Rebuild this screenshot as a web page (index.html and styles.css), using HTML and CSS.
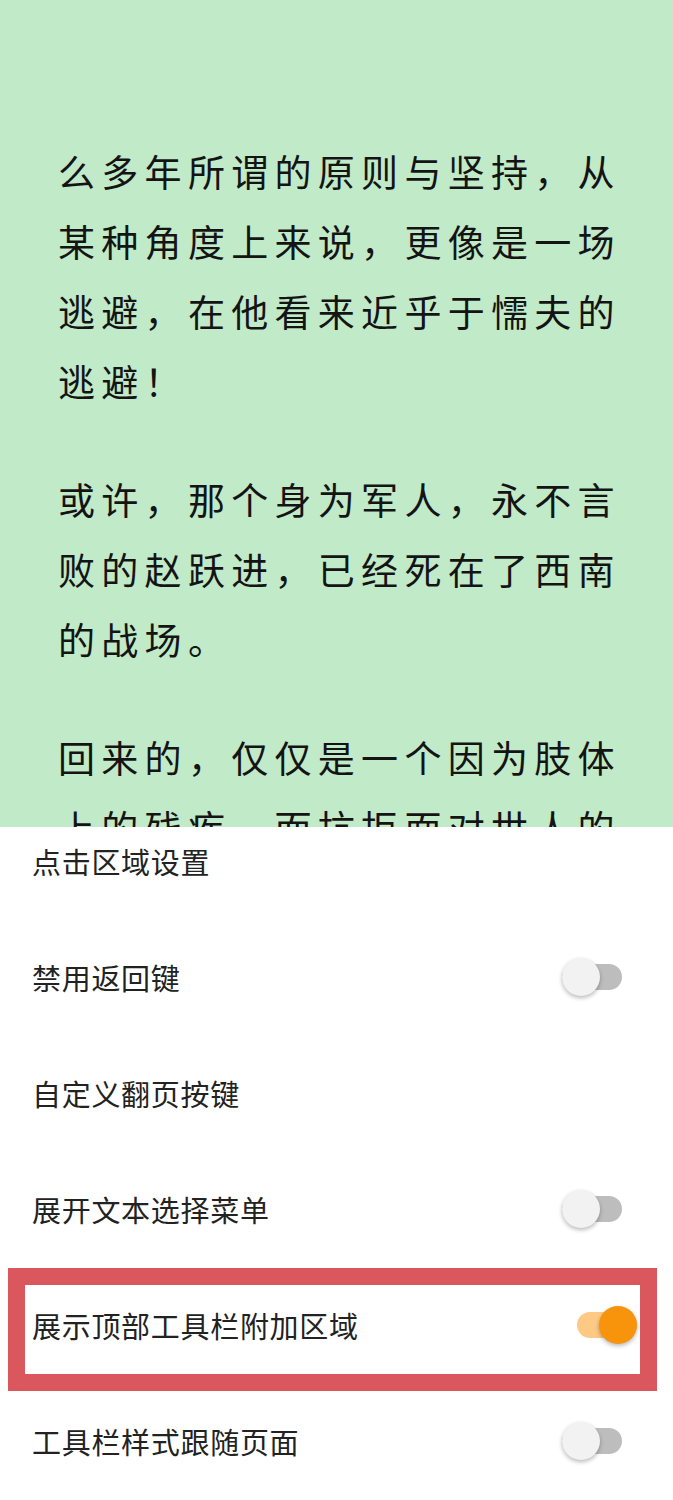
FILE: index.html
```html
<!DOCTYPE html>
<html lang="zh-CN">
<head>
<meta charset="utf-8">
<title>阅读设置</title>
<link rel="stylesheet" href="styles.css">
</head>
<body>
<div class="reader">
  <p class="para">么多年所谓的原则与坚持，从某种角度上来说，更像是一场逃避，在他看来近乎于懦夫的逃避！</p>
  <p class="para">或许，那个身为军人，永不言败的赵跃进，已经死在了西南的战场。</p>
  <p class="para">回来的，仅仅是一个因为肢体上的残疾，而抗拒面对世人的</p>
</div>
<div class="sheet">
  <ul class="options">
    <li class="option"><span class="label">点击区域设置</span></li>
    <li class="option"><span class="label">禁用返回键</span><span class="switch"><span class="thumb"></span></span></li>
    <li class="option"><span class="label">自定义翻页按键</span></li>
    <li class="option"><span class="label">展开文本选择菜单</span><span class="switch"><span class="thumb"></span></span></li>
    <li class="option marked"><span class="label">展示顶部工具栏附加区域</span><span class="switch on"><span class="thumb"></span></span></li>
    <li class="option"><span class="label">工具栏样式跟随页面</span><span class="switch"><span class="thumb"></span></span></li>
  </ul>
</div>
</body>
</html>
```
FILE: styles.css
```css
*, *::before, *::after {
  box-sizing: border-box;
}

html, body {
  margin: 0;
  padding: 0;
  background: #ffffff;
}

body {
  width: 673px;
  height: 1500px;
  overflow: hidden;
  font-family: "Noto Sans CJK SC", "Noto Sans", sans-serif;
}

/* reading page */
.reader {
  height: 827px;
  overflow: hidden;
  background: #c1eac8;
  padding: 136px 48px 0 58px;
}

.para {
  margin: 0 0 48px;
  font-size: 37px;
  line-height: 70px;
  letter-spacing: 6.3px;
  color: #141414;
}

/* settings sheet */
.sheet {
  height: 673px;
  overflow: hidden;
  background: #ffffff;
}

.options {
  list-style: none;
  margin: -24px 0 0;
  padding: 0;
}

.option {
  position: relative;
  height: 116px;
  display: flex;
  align-items: center;
  justify-content: space-between;
  padding: 0 51px 0 32px;
}

.label {
  font-size: 29px;
  letter-spacing: 0.7px;
  color: #222222;
}

.switch {
  position: relative;
  width: 60px;
  height: 26px;
  border-radius: 13px;
  background: #bdbdbd;
  display: flex;
  align-items: center;
}

.thumb {
  width: 38px;
  height: 38px;
  border-radius: 50%;
  background: #f2f2f2;
  box-shadow: 0 2px 4px rgba(0, 0, 0, 0.28);
}

.switch.on {
  background: #fdc985;
  justify-content: flex-end;
}

.switch.on .thumb {
  background: #f7940c;
}

.option.marked {
  padding-right: 36px;
}

/* red highlight frame around the row */
.option.marked::after {
  content: "";
  position: absolute;
  left: 8px;
  top: 1px;
  width: 649px;
  height: 123px;
  border: 17px solid #d9575d;
  pointer-events: none;
}
```
